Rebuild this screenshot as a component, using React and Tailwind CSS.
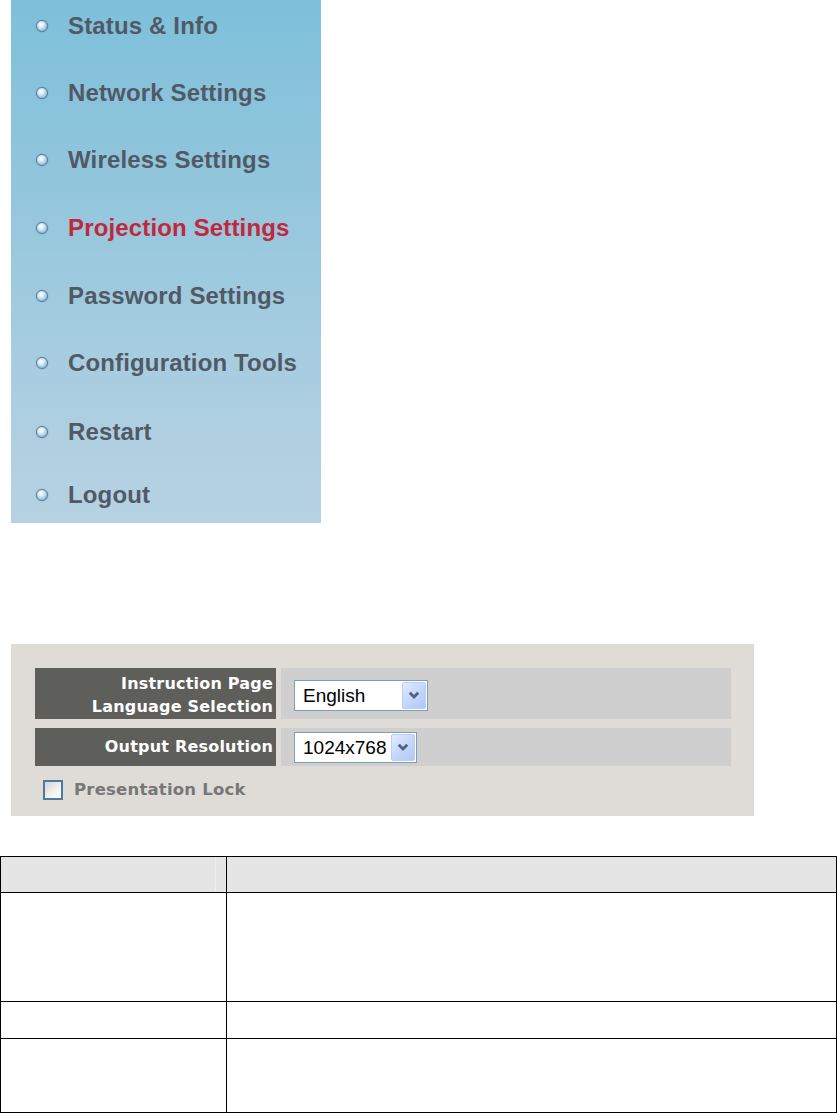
import React from "react";

const items = [
  ["Status & Info", "mt-[10px]"],
  ["Network Settings", "mt-[35px]"],
  ["Wireless Settings", "mt-[35px]"],
  ["Projection Settings", "mt-[36px]"],
  ["Password Settings", "mt-[36px]"],
  ["Configuration Tools", "mt-[35px]"],
  ["Restart", "mt-[37px]"],
  ["Logout", "mt-[31px]"],
];

function Bullet() {
  return (
    <span className="block w-[12px] h-[12px] rounded-full border-[1.5px] border-[#5f7d96] bg-[radial-gradient(circle_at_40%_35%,#ffffff_0%,#dbeef9_30%,#93c2df_70%,#5f98c0_100%)] shadow-[0_0_1px_#4d6a82]" />
  );
}

function Select({ value, width }) {
  return (
    <div
      className="flex items-stretch h-[31px] border border-[#7f9db9] bg-white p-[1px]"
      style={{ width }}
    >
      <div className="flex-1 flex items-center pl-[7px] text-[19px] text-black leading-none" style={{ fontFamily: '"Liberation Sans", Arial, sans-serif' }}>
        {value}
      </div>
      <div className="w-[24px] flex items-center justify-center rounded-[2px] border border-[#b9cdf6] bg-[linear-gradient(135deg,#e3ebfd_0%,#c6d7fb_50%,#b0c7f6_100%)]">
        <svg width="12" height="9" viewBox="0 0 12 9">
          <path d="M1.8 1.8 L6 6 L10.2 1.8" fill="none" stroke="#4d6185" strokeWidth="2.8" />
        </svg>
      </div>
    </div>
  );
}

export default function App() {
  return (
    <div className="w-[837px] h-[1113px] bg-white overflow-hidden relative">
      {/* Sidebar */}
      <div
        className="ml-[11px] w-[310px] h-[523px] bg-[linear-gradient(180deg,#7dc0da_0%,#92c6dc_35%,#a8cde0_70%,#b6d2e2_100%)] flex flex-col"
        style={{ fontFamily: '"Liberation Sans", Arial, sans-serif' }}
      >
        {items.map(([t, m]) => (
          <div key={t} className={"h-[32px] flex items-center " + m}>
            <div className="w-[57px] flex justify-end pr-[20px]">
              <Bullet />
            </div>
            <span
              className={
                "text-[24px] font-bold tracking-[0.15px] leading-none " +
                (t === "Projection Settings" ? "text-[#c1283e]" : "text-[#525966]")
              }
            >
              {t}
            </span>
          </div>
        ))}
      </div>

      {/* Form panel */}
      <div className="ml-[11px] mt-[121px] w-[743px] h-[172px] bg-[#dfdcd7] pt-[24px] pl-[24px] pr-[23px]">
        <div className="flex flex-col gap-[9px]">
          <div className="flex gap-[5px] h-[51px]">
            <div
              className="w-[241px] bg-[#5e5e5b] flex flex-col justify-center items-end pr-[3px] text-white text-[16px] font-bold leading-[23px] pt-[2px] tracking-[0.2px]"
              style={{ fontFamily: '"DejaVu Sans", Verdana, sans-serif' }}
            >
              <span>Instruction Page</span>
              <span>Language Selection</span>
            </div>
            <div className="flex-1 bg-[#cfcfcf] flex items-center pl-[13px] pt-[3px]">
              <Select value="English" width={134} />
            </div>
          </div>
          <div className="flex gap-[5px] h-[38px]">
            <div
              className="w-[241px] bg-[#5e5e5b] flex items-center justify-end pr-[3px] text-white text-[16px] font-bold tracking-[0.2px]"
              style={{ fontFamily: '"DejaVu Sans", Verdana, sans-serif' }}
            >
              Output Resolution
            </div>
            <div className="flex-1 bg-[#cfcfcf] flex items-center pl-[13px]">
              <Select value="1024x768" width={123} />
            </div>
          </div>
        </div>
        <div className="flex items-center mt-[12px] pl-[8px] gap-[11px]">
          <span className="block w-[20px] h-[20px] border-2 border-[#4f77a3] bg-[linear-gradient(135deg,#d4d4d0_0%,#f2f2f0_60%,#ffffff_100%)]" />
          <span
            className="text-[16.5px] font-bold text-[#777777] tracking-[0.2px]"
            style={{ fontFamily: '"DejaVu Sans", Verdana, sans-serif' }}
          >
            Presentation Lock
          </span>
        </div>
      </div>

      {/* Table */}
      <div className="mt-[40px] w-[837px] border-[1.5px] border-black">
        <div className="flex h-[36px] bg-[#e5e5e5] border-b-[1.5px] border-black">
          <div className="w-[226px] border-r-[1.5px] border-black relative">
            <span className="absolute right-[10px] top-0 bottom-0 w-[1px] bg-[#efefef]" />
          </div>
          <div className="flex-1" />
        </div>
        <div className="flex h-[109px] border-b-[1.5px] border-black">
          <div className="w-[226px] border-r-[1.5px] border-black" />
          <div className="flex-1" />
        </div>
        <div className="flex h-[37px] border-b-[1.5px] border-black">
          <div className="w-[226px] border-r-[1.5px] border-black" />
          <div className="flex-1" />
        </div>
        <div className="flex h-[73px]">
          <div className="w-[226px] border-r-[1.5px] border-black" />
          <div className="flex-1" />
        </div>
      </div>
    </div>
  );
}
